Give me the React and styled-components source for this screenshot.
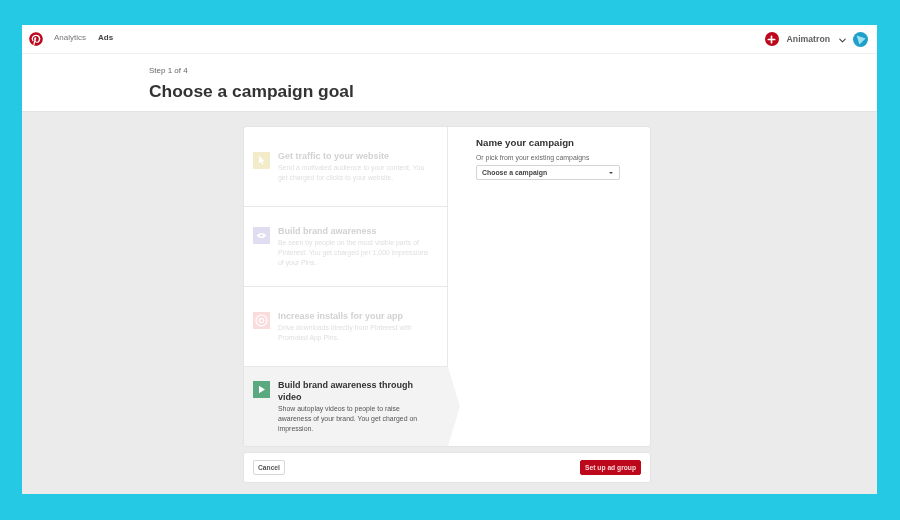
import React from "react";
import styled, { createGlobalStyle } from "styled-components";
import { FaPinterest, FaPlus } from "react-icons/fa";
import { ChevronDown } from "lucide-react";

const Global = createGlobalStyle`
  html, body { margin: 0; padding: 0; }
  body {
    width: 900px;
    height: 520px;
    overflow: hidden;
    background: #25c9e4;
    font-family: "Liberation Sans", Arial, sans-serif;
  }
`;

const Screen = styled.div`
  width: 900px;
  height: 520px;
  box-sizing: border-box;
  padding: 25px 23px 26px 22px;
`;

const Frame = styled.div`
  height: 100%;
  display: flex;
  flex-direction: column;
  background: #ebebeb;
  filter: blur(0.35px);
`;

const TopBar = styled.header`
  height: 28px;
  flex: none;
  display: flex;
  align-items: center;
  padding: 0 9px 0 7px;
  background: #fff;
  border-bottom: 1px solid #efefef;
`;

const Logo = styled(FaPinterest)`
  width: 14px;
  height: 14px;
  color: #bd081c;
  margin-right: 11px;
`;

const NavLink = styled.span`
  font-size: 8px;
  font-weight: ${p => (p.$active ? 700 : 400)};
  color: ${p => (p.$active ? "#444" : "#777")};
  margin-right: 12px;
  margin-top: -3px;
`;

const Account = styled.div`
  margin-left: auto;
  display: flex;
  align-items: center;
`;

const PlusBadge = styled.span`
  width: 14px;
  height: 14px;
  border-radius: 50%;
  background: #bd081c;
  color: #fff;
  display: flex;
  align-items: center;
  justify-content: center;
  font-size: 9px;
  margin-right: 8px;
`;

const AccountName = styled.span`
  font-size: 8.7px;
  font-weight: 700;
  color: #5f5f5f;
  margin-right: 6.5px;
`;

const Chevron = styled(ChevronDown)`
  width: 11px;
  height: 11px;
  color: #444;
  stroke-width: 2.4;
  margin-right: 5.5px;
  margin-top: 2px;
`;

const Avatar = styled.svg`
  width: 15px;
  height: 15px;
`;

const TitleBand = styled.div`
  height: 58px;
  flex: none;
  box-sizing: border-box;
  padding: 12px 0 0 127px;
  background: #fff;
  border-bottom: 1px solid #e2e2e2;
`;

const Step = styled.div`
  font-size: 8px;
  line-height: 10px;
  color: #666;
`;

const Title = styled.h1`
  margin: 3px 0 0;
  font-size: 17.4px;
  line-height: 24px;
  font-weight: 700;
  color: #333;
`;

const Body = styled.main`
  flex: 1;
  display: flex;
  flex-direction: column;
  align-items: center;
  gap: 7px;
  padding-top: 15px;
  padding-right: 5px;
`;

const Card = styled.section`
  width: 406px;
  height: 319px;
  display: flex;
  background: #fff;
  box-shadow: 0 0 0 1px #e4e4e4;
  border-radius: 2px;
`;

const Goals = styled.div`
  width: 204px;
  flex: none;
  display: grid;
  grid-template-rows: 80px 80px 80px 79px;
`;

const Goal = styled.div`
  display: flex;
  align-items: center;
  box-sizing: border-box;
  padding: 0 16px 0 9px;
  border-right: ${p => (p.$active ? "0" : "1px solid #e8e8e8")};
  border-bottom: ${p => (p.$active ? "0" : "1px solid #e8e8e8")};

  ${p =>
    p.$active &&
    `
    margin-right: -12px;
    padding-right: 28px;
    background: #f3f3f3;
    clip-path: polygon(0 0, 204px 0, 100% 50%, 204px 100%, 0 100%);
  `}
`;

const GoalInner = styled.div`
  display: flex;
  align-items: flex-start;
  gap: 8px;
`;

const GoalIcon = styled.div`
  width: 17px;
  height: 17px;
  flex: none;
  display: flex;
  align-items: center;
  justify-content: center;
  background: ${p => p.$bg};
  margin-top: 2px;
`;

const GoalTitle = styled.div`
  font-size: 9px;
  line-height: 12px;
  font-weight: 700;
  color: ${p => (p.$active ? "#333" : "#d2d2d2")};
`;

const GoalText = styled.div`
  margin-top: 1px;
  font-size: 6.9px;
  line-height: 10px;
  color: ${p => (p.$active ? "#555" : "#dedede")};
`;

const NamePanel = styled.div`
  flex: 1;
  padding: 10px 0 0 28px;
`;

const NameTitle = styled.h2`
  margin: 0;
  font-size: 9.7px;
  line-height: 12px;
  font-weight: 700;
  color: #333;
`;

const NameHint = styled.div`
  margin-top: 4px;
  font-size: 6.9px;
  line-height: 9px;
  color: #666;
`;

const Select = styled.div`
  width: 144px;
  height: 15px;
  margin-top: 3px;
  box-sizing: border-box;
  padding: 0 6px 0 5px;
  display: flex;
  align-items: center;
  justify-content: space-between;
  border: 1px solid #d5d5d5;
  border-radius: 2px;
  font-size: 6.9px;
  font-weight: 700;
  color: #444;

  &::after {
    content: "";
    border: 2px solid transparent;
    border-top: 2.5px solid #444;
    margin-top: 2px;
  }
`;

const Footer = styled.footer`
  width: 406px;
  height: 29px;
  box-sizing: border-box;
  padding: 0 9px;
  display: flex;
  align-items: center;
  justify-content: space-between;
  background: #fff;
  box-shadow: 0 0 0 1px #e4e4e4;
  border-radius: 2px;
`;

const Button = styled.button`
  height: 15px;
  padding: 0 ${p => (p.$primary ? "4px" : "4px")};
  border-radius: 2px;
  border: 1px solid ${p => (p.$primary ? "#bd081c" : "#d8d8d8")};
  background: ${p => (p.$primary ? "#bd081c" : "#fff")};
  color: ${p => (p.$primary ? "#f6d5d8" : "#555")};
  font-family: inherit;
  font-size: 6.7px;
  font-weight: 700;
`;

const goals = [
  {
    title: "Get traffic to your website",
    text: "Send a motivated audience to your content. You get charged for clicks to your website.",
    bg: "#f3ecca",
    icon: <path d="M6 4l5.5 5-2.4.3 1.3 2.8-1.2.5-1.2-2.8L6 11.5z" fill="#fff" />
  },
  {
    title: "Build brand awareness",
    text: "Be seen by people on the most visible parts of Pinterest. You get charged per 1,000 impressions of your Pins.",
    bg: "#e0ddf0",
    icon: (
      <>
        <path d="M3.5 8.5c3-3.4 7-3.4 10 0-3 3.4-7 3.4-10 0z" fill="#fff" />
        <circle cx="8.5" cy="8.5" r="1.3" fill="#e0ddf0" />
      </>
    )
  },
  {
    title: "Increase installs for your app",
    text: "Drive downloads directly from Pinterest with Promoted App Pins.",
    bg: "#fbdcdc",
    icon: (
      <>
        <circle cx="8.5" cy="8.5" r="5.5" fill="none" stroke="#fff" strokeWidth="1.2" />
        <circle cx="8.5" cy="8.5" r="2.2" fill="none" stroke="#fff" strokeWidth="1.2" />
      </>
    )
  },
  {
    title: "Build brand awareness through video",
    text: "Show autoplay videos to people to raise awareness of your brand. You get charged on impression.",
    bg: "#5aa97f",
    active: true,
    icon: <path d="M6 4.8l6 3.7-6 3.7z" fill="#fff" />
  }
];

export default function App() {
  return (
    <>
      <Global />
      <Screen>
        <Frame>
          <TopBar>
            <Logo />
            <NavLink>Analytics</NavLink>
            <NavLink $active>Ads</NavLink>
            <Account>
              <PlusBadge>
                <FaPlus />
              </PlusBadge>
              <AccountName>Animatron</AccountName>
              <Chevron />
              <Avatar viewBox="0 0 15 15">
                <circle cx="7.5" cy="7.5" r="7.5" fill="#1f9fc9" />
                <path d="M3.6 3.4l9 3.2-6.2 5.8z" fill="#9fe3f2" />
              </Avatar>
            </Account>
          </TopBar>
          <TitleBand>
            <Step>Step 1 of 4</Step>
            <Title>Choose a campaign goal</Title>
          </TitleBand>
          <Body>
            <Card>
              <Goals>
                {goals.map(g => (
                  <Goal key={g.title} $active={g.active}>
                    <GoalInner>
                      <GoalIcon $bg={g.bg}>
                        <svg width="17" height="17" viewBox="0 0 17 17">
                          {g.icon}
                        </svg>
                      </GoalIcon>
                      <div>
                        <GoalTitle $active={g.active}>{g.title}</GoalTitle>
                        <GoalText $active={g.active}>{g.text}</GoalText>
                      </div>
                    </GoalInner>
                  </Goal>
                ))}
              </Goals>
              <NamePanel>
                <NameTitle>Name your campaign</NameTitle>
                <NameHint>Or pick from your existing campaigns</NameHint>
                <Select>Choose a campaign</Select>
              </NamePanel>
            </Card>
            <Footer>
              <Button>Cancel</Button>
              <Button $primary>Set up ad group</Button>
            </Footer>
          </Body>
        </Frame>
      </Screen>
    </>
  );
}
